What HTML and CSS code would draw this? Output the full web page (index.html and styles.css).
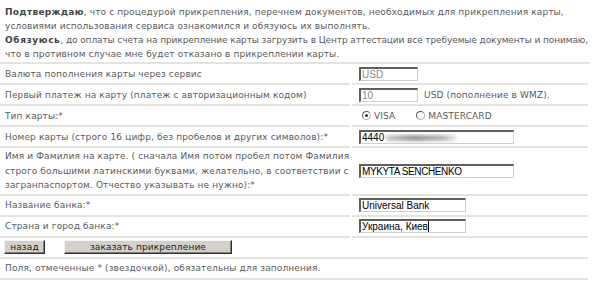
FILE: index.html
```html
<!DOCTYPE html>
<html lang="ru">
<head>
<meta charset="utf-8">
<title>Прикрепление карты</title>
<link rel="stylesheet" href="styles.css">
</head>
<body>
<div class="page">
  <div class="intro">
    <b>Подтверждаю</b>, что с процедурой прикрепления, перечнем документов, необходимых для прикрепления карты,<br>
    условиями использования сервиса ознакомился и обязуюсь их выполнять.<br>
    <span class="tight"><b>Обязуюсь</b>, до оплаты счета на прикрепление карты загрузить в Центр аттестации все требуемые документы и понимаю,</span><br>
    что в противном случае мне будет отказано в прикреплении карты.
  </div>
  <table class="form">
    <tr>
      <td class="label">Валюта пополнения карты через сервис</td>
      <td class="value"><span class="field w58 disabled">USD</span></td>
    </tr>
    <tr>
      <td class="label">Первый платеж на карту (платеж с авторизационным кодом)</td>
      <td class="value"><span class="field w58 disabled">10</span><span class="after">USD (пополнение в WMZ).</span></td>
    </tr>
    <tr>
      <td class="label">Тип карты:*</td>
      <td class="value">
        <span class="radio checked"></span><span class="rlabel">VISA</span><span class="radio second"></span><span class="rlabel">MASTERCARD</span>
      </td>
    </tr>
    <tr>
      <td class="label">Номер карты (строго 16 цифр, без пробелов и других символов):*</td>
      <td class="value"><span class="field w155">4440<span class="blur"></span></span></td>
    </tr>
    <tr>
      <td class="label tall">Имя и Фамилия на карте. ( сначала Имя потом пробел потом Фамилия строго большими латинскими буквами, желательно, в соответствии с загранпаспортом. Отчество указывать не нужно):*</td>
      <td class="value"><span class="field w155 caps">MYKYTA SENCHENKO</span></td>
    </tr>
    <tr>
      <td class="label">Название банка:*</td>
      <td class="value"><span class="field w106">Universal Bank</span></td>
    </tr>
    <tr>
      <td class="label">Страна и город банка:*</td>
      <td class="value"><span class="field w106">Украина, Киев<span class="caret"></span></span></td>
    </tr>
    <tr>
      <td class="buttons" colspan="2"><button class="btn back">назад</button><button class="btn order">заказать прикрепление</button></td>
    </tr>
    <tr>
      <td class="note" colspan="2">Поля, отмеченные * (звездочкой), обязательны для заполнения.</td>
    </tr>
  </table>
</div>
</body>
</html>
```

FILE: styles.css
```css
html, body {
  margin: 0;
  padding: 0;
  background: #ffffff;
}
body {
  font-family: "DejaVu Sans", Verdana, sans-serif;
  font-size: 9px;
  letter-spacing: 0.12px;
  color: #5a5a5a;
}
.page {
  width: 590px;
}
.intro {
  width: 590px;
  box-sizing: border-box;
  padding: 5px 0 1px 5px;
  line-height: 14px;
  white-space: nowrap;
  border-bottom: 2px solid #e4e4de;
}
.intro b {
  color: #444;
  letter-spacing: 0.3px;
}
.intro .tight {
  letter-spacing: -0.1px;
}
.intro .tight b {
  letter-spacing: 0.6px;
}
.form {
  width: 592px;
  border-collapse: separate;
  border-spacing: 2px 0;
  margin-left: -2px;
}
.form td {
  border-bottom: 2px solid #e4e4de;
  height: 19px;
  padding: 0;
  vertical-align: middle;
}
.label {
  width: 345px;
  padding-left: 5px !important;
}
.label.tall {
  line-height: 14.5px;
  padding-top: 1px !important;
  padding-bottom: 1px !important;
}
.value {
  padding-left: 7px !important;
  white-space: nowrap;
}
.field {
  display: inline-block;
  vertical-align: middle;
  box-sizing: border-box;
  height: 14px;
  line-height: 11px;
  padding: 0 1px;
  font-family: "Liberation Sans", Arial, sans-serif;
  font-size: 10px;
  letter-spacing: 0;
  color: #000;
  background: #fff;
  border-style: solid;
  border-width: 2px 1px 1px 2px;
  border-color: #5e5e5e #cfcfcf #cfcfcf #5e5e5e;
  overflow: hidden;
}
.field.caps {
  font-size: 10px;
  letter-spacing: -0.4px;
}
.field.disabled {
  color: #8a8a8a;
}
.w58 { width: 59px; }
.w155 { width: 155px; }
.w106 { width: 107px; }
.after {
  margin-left: 6px;
  vertical-align: middle;
}
.blur {
  display: inline-block;
  width: 70px;
  height: 6px;
  margin-left: 2px;
  vertical-align: middle;
  background: linear-gradient(90deg, #d0d0d0, #9a9a9a 40%, #b8b8b8 80%, #e8e8e8);
  filter: blur(1.5px);
}
.caret {
  display: inline-block;
  width: 1px;
  height: 11px;
  background: #000;
  vertical-align: top;
}
.radio {
  display: inline-block;
  box-sizing: border-box;
  width: 9px;
  height: 9px;
  border-radius: 50%;
  border: 1px solid #b0b0b0;
  border-top-color: #555;
  border-left-color: #555;
  vertical-align: middle;
  position: relative;
  margin-left: 3px;
}
.radio.checked::after {
  content: "";
  position: absolute;
  left: 2px;
  top: 2px;
  width: 3px;
  height: 3px;
  border-radius: 50%;
  background: #222;
}
.radio.second {
  margin-left: 21px;
}
.rlabel {
  margin-left: 3px;
  vertical-align: middle;
}
.buttons {
  padding-left: 4px !important;
}
.btn {
  font-family: "DejaVu Sans", Verdana, sans-serif;
  font-size: 9px;
  letter-spacing: 0.12px;
  color: #222;
  background: #d4d0c8;
  border: 1px solid;
  border-color: #f4f4f4 #303030 #303030 #f4f4f4;
  box-shadow: inset -1px -1px 0 #808080;
  height: 14px;
  padding: 0;
  line-height: 11px;
  vertical-align: middle;
}
.btn.back {
  width: 41px;
}
.btn.order {
  width: 168px;
  margin-left: 19px;
}
.note {
  padding-left: 5px !important;
}
```
